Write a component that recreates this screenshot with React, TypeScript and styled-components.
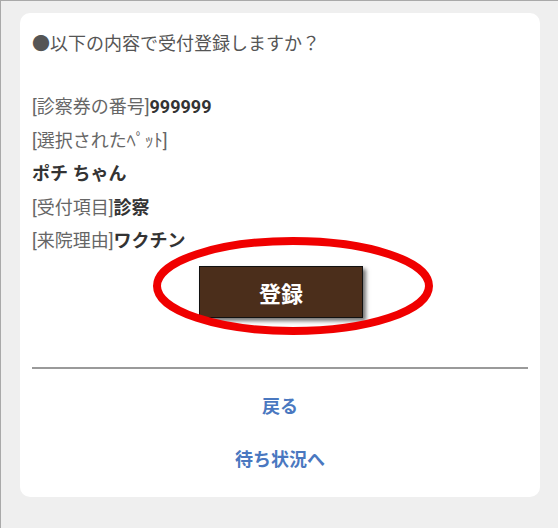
import styled, { createGlobalStyle } from 'styled-components';

const GlobalStyle = createGlobalStyle`
  html, body {
    margin: 0;
    padding: 0;
  }
  body {
    font-family: Roboto, "Noto Sans CJK JP", sans-serif;
    background: #efefef;
  }
`

const Page = styled.div`
  box-sizing: border-box;
  min-height: 528px;
  width: 558px;
  background: #efefef;
  border-top: 1px solid #a9a9a9;
  border-left: 1px solid #a9a9a9;
  padding: 12px 18px 0 19px;
`

const Card = styled.div`
  box-sizing: border-box;
  height: 484px;
  background: #fff;
  border-radius: 10px;
  padding: 14px 12px 0 12px;
  display: flex;
  flex-direction: column;
`

const Question = styled.div`
  font-size: 18px;
  line-height: 33px;
  color: #555;
  margin-bottom: 30px;
`

const Line = styled.div`
  font-size: 18px;
  line-height: 33.5px;
  color: #666;
  white-space: nowrap;
`

const Value = styled.span`
  font-weight: 700;
  color: #333;
`

const ButtonArea = styled.div`
  position: relative;
  display: flex;
  justify-content: center;
  padding-top: 8px;
  padding-left: 2px;
`

const RegisterButton = styled.button`
  width: 164px;
  height: 52px;
  background: #4b2e1b;
  border: 1px solid #111;
  box-shadow: 3px 3px 4px rgba(0, 0, 0, 0.55);
  color: #fff;
  font-family: Roboto, "Noto Sans CJK JP", sans-serif;
  font-size: 22px;
  font-weight: 700;
  cursor: pointer;
`

const Marker = styled.svg`
  position: absolute;
  left: 119px;
  top: -23px;
  pointer-events: none;
`

const Rule = styled.hr`
  margin: 49px 0 0 0;
  border: none;
  border-top: 2px solid #9a9a9a;
`

const Links = styled.div`
  display: flex;
  flex-direction: column;
  align-items: center;
  gap: 19px;
  padding-top: 21px;
`

const NavLink = styled.a`
  font-size: 18px;
  line-height: 34px;
  font-weight: 700;
  color: #4a78c0;
  text-decoration: none;
  cursor: pointer;
`

function App() {
  return (
    <>
      <GlobalStyle />
      <Page>
        <Card>
          <Question>●以下の内容で受付登録しますか？</Question>
          <Line>[診察券の番号]<Value>999999</Value></Line>
          <Line>[選択されたﾍﾟｯﾄ]</Line>
          <Line><Value>ポチ ちゃん</Value></Line>
          <Line>[受付項目]<Value>診察</Value></Line>
          <Line>[来院理由]<Value>ワクチン</Value></Line>
          <ButtonArea>
            <RegisterButton>登録</RegisterButton>
            <Marker width="284" height="102" viewBox="0 0 284 102">
              <ellipse cx="142" cy="51" rx="136" ry="45" fill="none" stroke="#f00000" strokeWidth="8" />
            </Marker>
          </ButtonArea>
          <Rule />
          <Links>
            <NavLink>戻る</NavLink>
            <NavLink>待ち状況へ</NavLink>
          </Links>
        </Card>
      </Page>
    </>
  );
}

export default App;
